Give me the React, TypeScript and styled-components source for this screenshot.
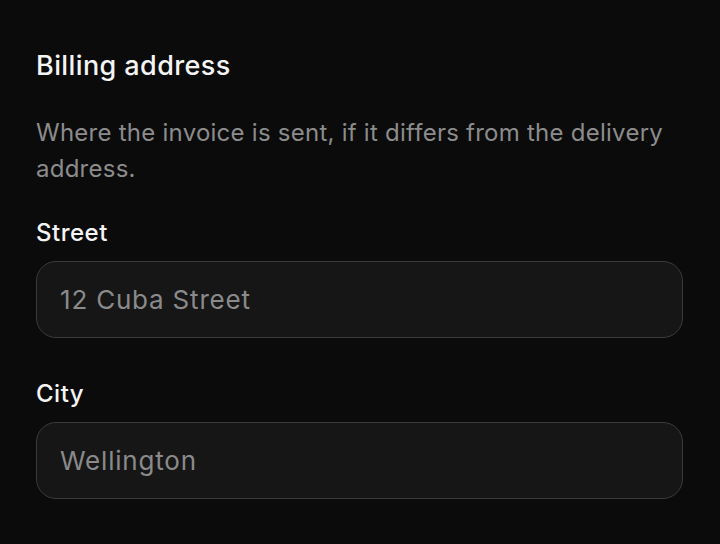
import React from 'react'
import styled, { createGlobalStyle } from 'styled-components'

const GlobalStyle = createGlobalStyle`
  html, body {
    background: #0b0b0b;
    margin: 0;
  }
  body {
    font-family: Inter, "Noto Sans", "Liberation Sans", sans-serif;
  }
`
const Page = styled.div`
  display: flex;
  flex-direction: column;
  padding: 50px 37px 0 36px;
`
const Title = styled.h2`
  color: #f4f4f4;
  font-size: 27px;
  font-weight: 500;
  letter-spacing: 0.4px;
  line-height: 32px;
  margin: 0;
`
const Description = styled.p`
  color: #8c8c8c;
  font-size: 24px;
  letter-spacing: 0.25px;
  line-height: 36px;
  margin: 33px 0 0;
`
const Field = styled.label<{ $gap: number }>`
  display: flex;
  flex-direction: column;
  gap: 14px;
  margin-top: ${(props) => props.$gap}px;
`
const Label = styled.span`
  color: #f4f4f4;
  font-size: 24px;
  font-weight: 500;
  letter-spacing: 0.5px;
  line-height: 28px;
`
const Input = styled.input`
  background: #161616;
  border: 1.5px solid #3b3b3b;
  border-radius: 20px;
  box-sizing: border-box;
  color: #e8e8e8;
  font-family: inherit;
  font-size: 26px;
  height: 77px;
  letter-spacing: 0.8px;
  outline: none;
  padding: 0 23px;
  width: 100%;

  &::placeholder {
    color: #8a8a8a;
  }
`

const fields = [
  { label: 'Street', placeholder: '12 Cuba Street', gap: 32 },
  { label: 'City', placeholder: 'Wellington', gap: 42 },
]

export default function App() {
  return (
    <>
      <GlobalStyle />
      <Page>
        <Title>Billing address</Title>
        <Description>Where the invoice is sent, if it differs from the delivery address.</Description>
        {fields.map((f) => (
          <Field key={f.label} $gap={f.gap}>
            <Label>{f.label}</Label>
            <Input placeholder={f.placeholder} />
          </Field>
        ))}
      </Page>
    </>
  )
}
